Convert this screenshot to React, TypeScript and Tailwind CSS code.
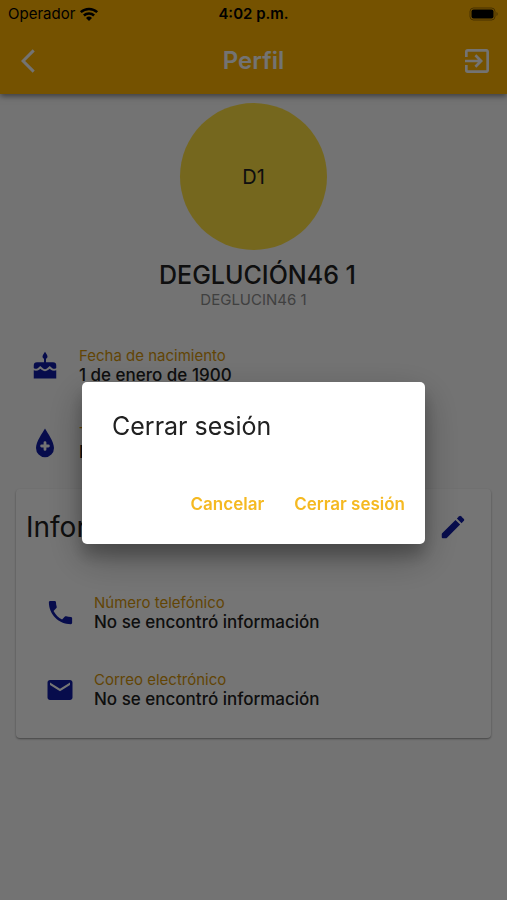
import React from 'react';
import { MdArrowBackIosNew, MdEmail, MdExitToApp, MdPhone } from 'react-icons/md';

function BloodDrop() {
  return (
    <svg viewBox="0 0 20 30" className="h-[30px] w-5" aria-hidden="true">
      <path d="M10 0.5C7.6 5 1 13.2 1 20a9 9.3 0 0 0 18 0C19 13.2 12.4 5 10 0.5Z" fill="currentColor" />
      <path d="M10 14.6v6.8M6.6 18h6.8" stroke="#fafafa" strokeWidth="2.8" strokeLinecap="round" />
    </svg>
  );
}

function CakeIcon() {
  return (
    <svg viewBox="0 0 24 24" className="size-[30px]" fill="currentColor" aria-hidden="true">
      <path d="M12 .6c-.8 1.5-2 2.6-2 3.9 0 1 .9 1.7 2 1.7s2-.7 2-1.7c0-1.3-1.2-2.4-2-3.9Z" />
      <path d="M11.2 5.5h1.6v4h-1.6Z" />
      <path d="M3 11.5a2.6 2.6 0 0 1 2.6-2.6h12.8a2.6 2.6 0 0 1 2.6 2.6v2c-1.2 1.2-2.4.9-3.4 0L15.8 12l-2.3 2c-.9.8-2.1.8-3 0L8.2 12l-1.8 1.5c-1 .9-2.2 1.2-3.4 0Z" />
      <path d="M3 15.4c1.5.7 3.2.4 4.3-.5l.9-.8 1.4 1.1c1.4 1.2 3.4 1.2 4.8 0l1.4-1.1.9.8c1.1.9 2.8 1.2 4.3.5v6.6H3Z" />
    </svg>
  );
}

function PencilIcon() {
  return (
    <svg viewBox="0 0 24 24" className="size-[30px]" fill="currentColor" aria-hidden="true">
      <path d="M14 6.3 17.7 10 7.2 20.5c-.3.3-.6.5-1 .5H3.8c-.5 0-.8-.3-.8-.8v-2.4c0-.4.2-.7.5-1Z" />
      <path d="M20.7 7a1 1 0 0 0 0-1.4l-2.3-2.3a1 1 0 0 0-1.4 0L15.1 5.2l3.7 3.7Z" />
    </svg>
  );
}

function WifiIcon() {
  return (
    <svg viewBox="0 0 20 15" className="h-[15px] w-5" fill="none" aria-hidden="true">
      <path d="M1.8 5.2a11.8 11.8 0 0 1 16.4 0M4.9 8.5a7.3 7.3 0 0 1 10.2 0" stroke="currentColor" strokeWidth="2.5" />
      <path d="M10 14l-3-3.1a4.3 4.3 0 0 1 6 0Z" fill="currentColor" />
    </svg>
  );
}

function BatteryIcon() {
  return (
    <svg viewBox="0 0 30 14" className="h-[14px] w-[30px]" aria-hidden="true">
      <rect x="1" y="1" width="25" height="12" rx="3.5" fill="none" stroke="currentColor" strokeOpacity="0.4" />
      <rect x="2.5" y="2.5" width="22" height="9" rx="2" fill="currentColor" />
      <path d="M27.5 5v4c1.6-.6 1.6-3.4 0-4Z" fill="currentColor" fillOpacity="0.4" />
    </svg>
  );
}

type InfoRowProps = {
  icon: React.ReactNode;
  label: string;
  value: string;
};

function InfoRow({ icon, label, value }: InfoRowProps) {
  return (
    <div className="flex h-[77px] items-center gap-[18px]">
      <div className="flex w-8 shrink-0 justify-center text-[#101ca6]">{icon}</div>
      <div>
        <p className="text-[15px] leading-[18px] text-[#d6960a]">{label}</p>
        <p className="text-[17px] leading-5 font-medium text-[#212121]">{value}</p>
      </div>
    </div>
  );
}

const personal = [
  { icon: <CakeIcon />, label: 'Fecha de nacimiento', value: '1 de enero de 1900' },
  { icon: <BloodDrop />, label: 'Tipo de sangre', value: 'No se encontró información' },
];

const contact = [
  { icon: <MdPhone size={31} />, label: 'Número telefónico', value: 'No se encontró información' },
  { icon: <MdEmail size={30} />, label: 'Correo electrónico', value: 'No se encontró información' },
];

export default function App() {
  return (
    <div className="min-h-screen bg-[#fafafa] font-['Inter',sans-serif] text-[#212121]">
      <header className="bg-[#ffb300] shadow-[0_2px_6px_rgba(0,0,0,0.5)]">
        <div className="grid h-7 grid-cols-3 items-center px-2 text-[15px] text-black">
          <div className="flex items-center gap-1">
            <span>Operador</span>
            <WifiIcon />
          </div>
          <span className="text-center font-semibold">4:02 p.m.</span>
          <div className="flex justify-end">
            <BatteryIcon />
          </div>
        </div>
        <div className="flex h-[66px] items-center justify-between px-[14px] text-[#fafafa]">
          <button type="button" aria-label="Atrás" className="w-8">
            <MdArrowBackIosNew size={28} />
          </button>
          <h1 className="text-2xl font-semibold">Perfil</h1>
          <button type="button" aria-label="Salir" className="w-8">
            <MdExitToApp size={32} />
          </button>
        </div>
      </header>

      <main className="px-4 pt-[9px]">
        <div className="flex flex-col items-center">
          <div className="flex size-[147px] items-center justify-center rounded-full bg-[#ffe042] text-xl">D1</div>
          <h2 className="mt-[9px] pl-2 text-[25px] leading-8 font-medium">DEGLUCIÓN46 1</h2>
          <p className="text-[15px] leading-[18px] text-[#8c8c8c]">DEGLUCIN46 1</p>
        </div>

        <section className="mt-[18px] pl-[13px]">
          {personal.map((item) => (
            <InfoRow key={item.label} {...item} />
          ))}
        </section>

        <section className="mt-2 rounded bg-white pt-4 pr-[23px] pb-[10px] pl-[10px] shadow-[0_1px_2px_rgba(0,0,0,0.4)]">
          <div className="flex h-11 items-center justify-between">
            <h2 className="text-[28px]">Información de contacto</h2>
            <button type="button" aria-label="Editar" className="text-[#101ca6]">
              <PencilIcon />
            </button>
          </div>
          <div className="mt-[25px] pl-[18px]">
            {contact.map((item) => (
              <InfoRow key={item.label} {...item} />
            ))}
          </div>
        </section>
      </main>

      <div className="fixed inset-0 flex items-center justify-center bg-black/54 px-[82px] pt-[25px]">
        <div
          role="dialog"
          aria-modal="true"
          aria-labelledby="logout-title"
          className="w-full max-w-sm rounded-[5px] bg-white shadow-[0_14px_38px_rgba(0,0,0,0.3),0_12px_16px_rgba(0,0,0,0.2)]"
        >
          <h2 id="logout-title" className="px-[30px] pt-7 text-[25px] leading-8">
            Cerrar sesión
          </h2>
          <div className="mt-[38px] flex h-16 items-start justify-end gap-[30px] pt-3 pr-5 text-[17px] leading-6 font-semibold text-[#f5b921]">
            <button type="button">Cancelar</button>
            <button type="button">Cerrar sesión</button>
          </div>
        </div>
      </div>
    </div>
  );
}
